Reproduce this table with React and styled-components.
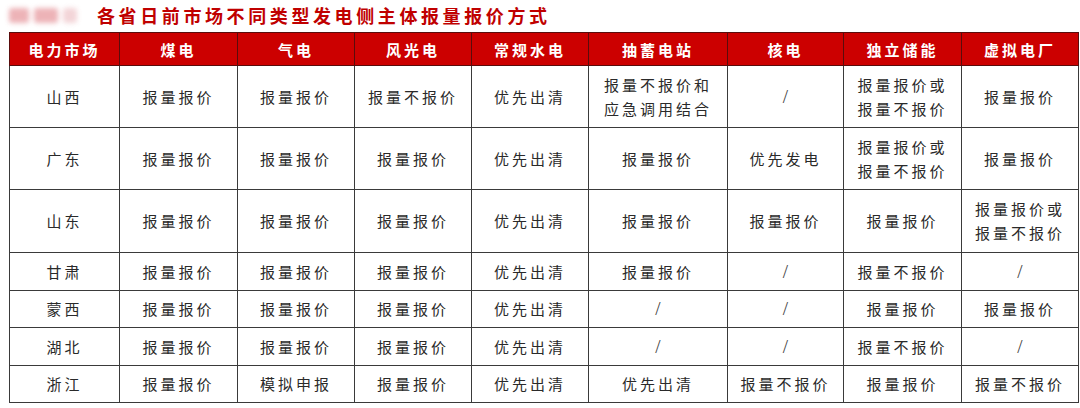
import React from "react";
import styled, { createGlobalStyle } from "styled-components";

const GlobalStyle = createGlobalStyle`
  html, body {
    margin: 0;
    padding: 0;
    background: #ffffff;
  }
  body {
    font-family: "Noto Sans CJK SC", "Noto Sans", sans-serif;
  }
`;

const columns = [
  { title: "电力市场", width: 110 },
  { title: "煤电", width: 118 },
  { title: "气电", width: 117 },
  { title: "风光电", width: 117 },
  { title: "常规水电", width: 117 },
  { title: "抽蓄电站", width: 139 },
  { title: "核电", width: 116 },
  { title: "独立储能", width: 118 },
  { title: "虚拟电厂", width: 117 },
];

const rows = [
  {
    height: 62,
    cells: ["山西", "报量报价", "报量报价", "报量不报价", "优先出清", ["报量不报价和", "应急调用结合"], "/", ["报量报价或", "报量不报价"], "报量报价"],
  },
  {
    height: 62,
    cells: ["广东", "报量报价", "报量报价", "报量报价", "优先出清", "报量报价", "优先发电", ["报量报价或", "报量不报价"], "报量报价"],
  },
  {
    height: 63,
    cells: ["山东", "报量报价", "报量报价", "报量报价", "优先出清", "报量报价", "报量报价", "报量报价", ["报量报价或", "报量不报价"]],
  },
  {
    height: 38,
    cells: ["甘肃", "报量报价", "报量报价", "报量报价", "优先出清", "报量报价", "/", "报量不报价", "/"],
  },
  {
    height: 37,
    cells: ["蒙西", "报量报价", "报量报价", "报量报价", "优先出清", "/", "/", "报量报价", "报量报价"],
  },
  {
    height: 38,
    cells: ["湖北", "报量报价", "报量报价", "报量报价", "优先出清", "/", "/", "报量不报价", "/"],
  },
  {
    height: 37,
    cells: ["浙江", "报量报价", "模拟申报", "报量报价", "优先出清", "优先出清", "报量不报价", "报量报价", "报量不报价"],
  },
];

const Page = styled.div`
  width: 1080px;
  height: 408px;
  overflow: hidden;
  padding-left: 9px;
  box-sizing: border-box;
`;

const TitleBar = styled.div`
  height: 32px;
  display: flex;
  align-items: center;
  gap: 16px;
`;

const BlurredLogo = styled.div`
  width: 72px;
  height: 20px;
  margin-top: -2px;
  display: flex;
  align-items: center;
  gap: 5px;
  filter: blur(2.5px);
  opacity: 0.75;

  span {
    height: 15px;
    background: #e79aa0;
    border-radius: 3px;
  }
  span:nth-child(1) { width: 20px; }
  span:nth-child(2) { width: 24px; }
  span:nth-child(3) { width: 14px; background: #efc7cb; }
`;

const Title = styled.h1`
  margin: 0;
  margin-top: -3px;
  color: #c00000;
  font-size: 18px;
  font-weight: 700;
  letter-spacing: 3.6px;
  font-family: "Noto Sans CJK SC", sans-serif;
`;

const Table = styled.table`
  border-collapse: collapse;
  table-layout: fixed;
  width: 1069px;
`;

const HeadCell = styled.th`
  height: 33px;
  padding: 0;
  background: #cc0000;
  color: #ffffff;
  font-size: 15px;
  font-weight: 700;
  letter-spacing: 3px;
  text-align: center;
  border: 1.5px solid #5a0c0c;
  box-sizing: border-box;
`;

const BodyRow = styled.tr`
  height: ${(p) => p.$height}px;
`;

const Cell = styled.td`
  padding: 0;
  text-align: center;
  vertical-align: middle;
  color: #2a2a2a;
  font-size: 15px;
  letter-spacing: 3px;
  line-height: 24px;
  border: 1.5px solid #3a3a3a;
`;

const Slash = styled.span`
  font-family: "Liberation Serif", serif;
  font-size: 19px;
  color: #444;
  letter-spacing: 0;
`;

const renderValue = (value) => {
  if (Array.isArray(value)) {
    return value.map((line) => <div key={line}>{line}</div>);
  }
  if (value === "/") return <Slash>/</Slash>;
  return value;
};

export default function App() {
  return (
    <Page>
      <GlobalStyle />
      <TitleBar>
        <BlurredLogo>
          <span />
          <span />
          <span />
        </BlurredLogo>
        <Title>各省日前市场不同类型发电侧主体报量报价方式</Title>
      </TitleBar>
      <Table>
        <colgroup>
          {columns.map((c) => (
            <col key={c.title} style={{ width: c.width }} />
          ))}
        </colgroup>
        <thead>
          <tr>
            {columns.map((c) => (
              <HeadCell key={c.title}>{c.title}</HeadCell>
            ))}
          </tr>
        </thead>
        <tbody>
          {rows.map((r) => (
            <BodyRow key={r.cells[0]} $height={r.height}>
              {r.cells.map((v, i) => (
                <Cell key={i}>{renderValue(v)}</Cell>
              ))}
            </BodyRow>
          ))}
        </tbody>
      </Table>
    </Page>
  );
}
